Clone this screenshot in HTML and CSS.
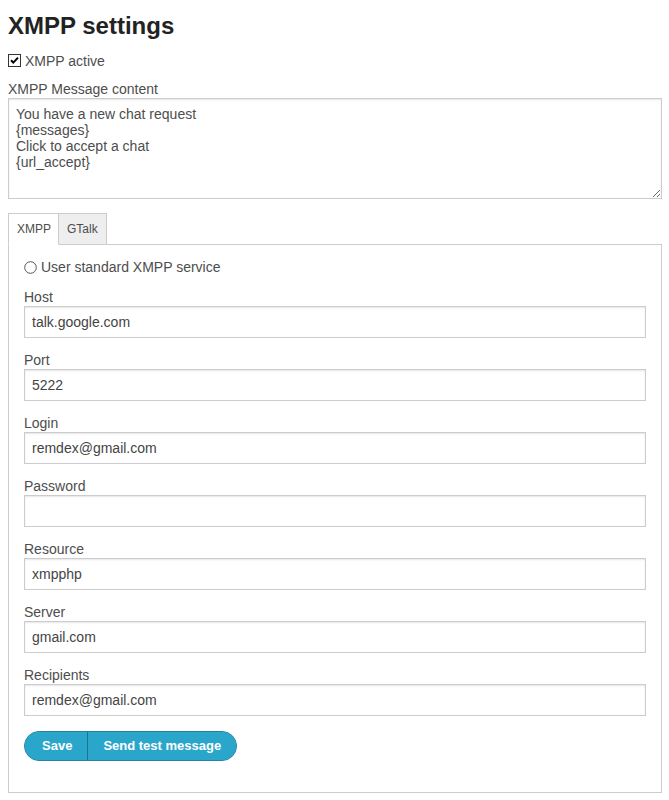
FILE: index.html
```html
<!DOCTYPE html>
<html lang="en">
<head>
<meta charset="utf-8">
<title>XMPP settings</title>
<link rel="stylesheet" href="styles.css">
</head>
<body>
<h1 class="title">XMPP settings</h1>

<label class="check-row">
  <svg class="checkbox" width="13" height="13" viewBox="0 0 13 13" aria-hidden="true">
    <rect x="0.5" y="0.5" width="12" height="12" fill="#fff" stroke="#333"/>
    <path d="M3 6.2 L5.3 8.6 L10 3.6" fill="none" stroke="#000" stroke-width="2"/>
  </svg>
  <span>XMPP active</span>
</label>

<div class="label">XMPP Message content</div>
<textarea class="message">You have a new chat request
{messages}
Click to accept a chat
{url_accept}</textarea>

<div class="tabs">
  <div class="tab active">XMPP</div>
  <div class="tab">GTalk</div>
</div>
<div class="panel">
  <label class="radio-row">
    <svg class="radio" width="13" height="13" viewBox="0 0 13 13" aria-hidden="true">
      <circle cx="6.5" cy="6.5" r="5.8" fill="#fff" stroke="#555" stroke-width="1"/>
    </svg>
    <span>User standard XMPP service</span>
  </label>

  <div class="field"><div class="label">Host</div><input class="input" type="text" value="talk.google.com"></div>
  <div class="field"><div class="label">Port</div><input class="input" type="text" value="5222"></div>
  <div class="field"><div class="label">Login</div><input class="input" type="text" value="remdex@gmail.com"></div>
  <div class="field"><div class="label">Password</div><input class="input" type="password" value=""></div>
  <div class="field"><div class="label">Resource</div><input class="input" type="text" value="xmpphp"></div>
  <div class="field"><div class="label">Server</div><input class="input" type="text" value="gmail.com"></div>
  <div class="field"><div class="label">Recipients</div><input class="input" type="text" value="remdex@gmail.com"></div>

  <div class="btn-group">
    <button class="btn btn-save" type="button">Save</button>
    <button class="btn btn-send" type="button">Send test message</button>
  </div>
</div>
</body>
</html>
```
FILE: styles.css
```css
html, body {
  background: #fff;
}
body {
  margin: 8px 7px 8px 8px;
  font-family: "Liberation Sans", Arial, sans-serif;
  font-size: 14px;
  color: #4d4d4d;
}
.title {
  margin: 3px 0 0;
  font-size: 24px;
  line-height: 29px;
  font-weight: bold;
  color: #222;
}
.check-row {
  display: flex;
  align-items: center;
  gap: 4px;
  margin-top: 12px;
  line-height: 18px;
}
.checkbox {
  display: block;
  margin-top: -1px;
}
.label {
  line-height: 18px;
  margin-top: 10px;
}
.message {
  display: block;
  box-sizing: border-box;
  width: 100%;
  height: 101px;
  margin: 0;
  padding: 7px;
  border: 1px solid #ccc;
  font-family: "Liberation Sans", Arial, sans-serif;
  font-size: 14px;
  line-height: 16px;
  color: #4d4d4d;
  box-shadow: inset 0 1px 2px rgba(0,0,0,0.1);
}
.tabs {
  display: flex;
  margin-top: 14px;
  margin-bottom: -1px;
  position: relative;
}
.tab {
  box-sizing: border-box;
  height: 32px;
  line-height: 30px;
  padding: 0 7px 0 8px;
  border: 1px solid #ccc;
  font-size: 12px;
  color: #4d4d4d;
  background: #eee;
}
.tab + .tab {
  margin-left: -1px;
  padding-right: 8px;
}
.tab.active {
  background: #fff;
  border-bottom-color: #fff;
  position: relative;
  z-index: 1;
}
.panel {
  border: 1px solid #ccc;
  padding: 13px 15px 31px;
}
.radio-row {
  display: flex;
  align-items: center;
  gap: 4px;
  line-height: 18px;
  margin-bottom: 12px;
}
.radio {
  display: block;
}
.field {
  margin-bottom: 13px;
}
.field .label {
  margin-top: 0;
}
.input {
  display: block;
  box-sizing: border-box;
  width: 100%;
  height: 32px;
  margin: 0;
  padding: 0 7px;
  border: 1px solid #ccc;
  font-family: "Liberation Sans", Arial, sans-serif;
  font-size: 14px;
  color: #444;
  background: #fff;
  box-shadow: inset 0 1px 2px rgba(0,0,0,0.1);
  outline: none;
}
.btn-group {
  display: inline-flex;
  margin-top: 2px;
  border: 1px solid #2284a1;
  border-radius: 1000px;
  background: #2ba6cb;
  overflow: hidden;
}
.btn {
  height: 28px;
  margin: 0;
  border: 0;
  background: #2ba6cb;
  color: #fff;
  font-family: "Liberation Sans", Arial, sans-serif;
  font-size: 13px;
  font-weight: bold;
  line-height: 28px;
  cursor: pointer;
}
.btn-save {
  padding: 0 15px 0 17px;
}
.btn-send {
  padding: 0 15px;
  border-left: 1px solid #1e728c;
}
```
